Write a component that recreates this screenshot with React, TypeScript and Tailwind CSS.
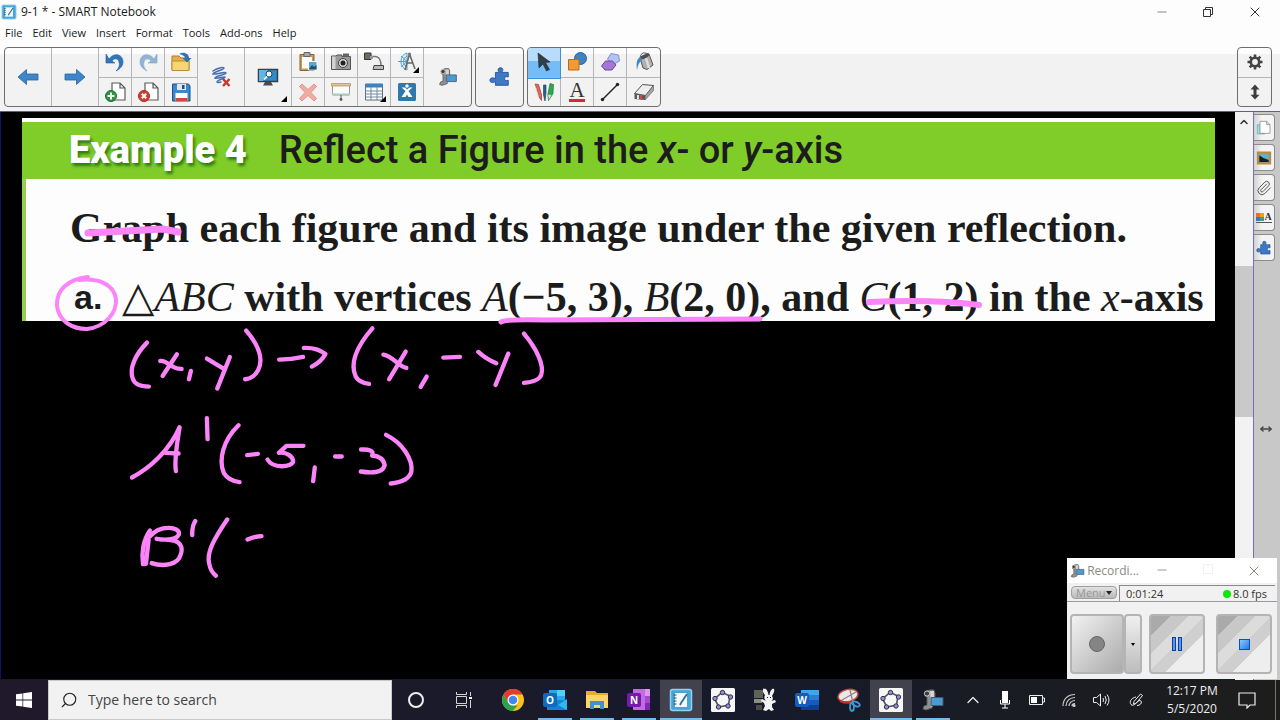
import React from 'react';
import { Search, X, Minus, ChevronUp, Paperclip, MoveHorizontal } from 'lucide-react';

interface IconProps {
  className?: string;
}

const box = '0 0 24 24';

const Arrow = ({ className = '' }: IconProps) => (
  <svg viewBox="0 0 24 24" className={`h-6 w-6 ${className}`}>
    <path d="M2 12 10.500 4.500V9H22v6H10.500v4.500Z" fill="#3d86c9" stroke="#27659f" strokeWidth=".8" />
  </svg>
);

const Undo = ({ className = '' }: IconProps) => (
  <svg viewBox="0 0 24 24" className={`h-6 w-6 ${className}`}>
    <path d="M6 9C11 2 20 4 20 12c0 4-3 7-7 9 3-3 4-6 3-9-1-4-5-4-7-1l3 2H3V4Z" fill="#2f77ba" stroke="#225f9b" strokeWidth=".6" />
  </svg>
);

const PageSheet = () => (
  <path d="M9 3h8l5 5v12H9Z M17 3v5h5" fill="#fff" stroke="#5b5b5b" strokeWidth="1.200" />
);

const AddPage = () => (
  <svg viewBox={box} className="h-6 w-6">
    <PageSheet />
    <circle cx="8" cy="16" r="5.500" fill="#2f9440" stroke="#1d6f2b" />
    <path d="M8 12.500v7M4.500 16h7" stroke="#fff" strokeWidth="2" />
  </svg>
);

const DeletePage = () => (
  <svg viewBox={box} className="h-6 w-6">
    <PageSheet />
    <circle cx="8" cy="16" r="5.500" fill="#d2412f" stroke="#a52c1e" />
    <path d="m5.800 13.800 4.400 4.400m0-4.400-4.400 4.400" stroke="#fff" strokeWidth="2" />
  </svg>
);

const OpenFolder = () => (
  <svg viewBox={box} className="h-6 w-6">
    <path d="M3 6h7l2 2h8v12H3Z" fill="#e2b04a" stroke="#a97f2c" />
    <path d="M3 11h17v9.500H3Z" fill="#f6d577" stroke="#b98d38" />
    <path d="M10 4c5-3 10 0 10 4h2.500l-4.500 4.500L13.500 8H16c0-2-3-3.500-6-4Z" fill="#2e72b4" />
  </svg>
);

const Save = () => (
  <svg viewBox={box} className="h-6 w-6">
    <path d="M3.500 4h16l1.500 2v15H3.500Z" fill="#3f87cc" stroke="#1f4f86" />
    <path d="M8 4h9v6H8Z" fill="#dfe7ee" />
    <path d="M13 5h2.500v4H13Z" fill="#2b4a70" />
    <path d="M6.500 13h12v8h-12Z" fill="#fff" />
    <path d="M6.500 18h12v3h-12Z" fill="#c94a3e" />
  </svg>
);

const ClearInk = () => (
  <svg viewBox={box} className="h-6 w-6">
    <path
      d="M4 6c4-3 10-4 11-3 0 2-9 3-11 6 3 1 12-3 13-1 0 2-9 2-11 5 2 1 9-2 10-1 0 2-7 2-8 5 1 1 3 0 4 0"
      fill="none"
      stroke="#4871b0"
      strokeWidth="1.500"
      strokeLinecap="round"
    />
    <path d="m14 14 6.500 7m0-7L14 21" stroke="#c0392b" strokeWidth="2.400" />
  </svg>
);

const ScreenView = () => (
  <svg viewBox={box} className="h-6 w-6">
    <path d="M2.500 4.500h19v12h-19Z" fill="#2f8ccb" stroke="#3b3f45" strokeWidth="1.500" />
    <path d="M3 5h9l-5 11H3Z" fill="#64b4e4" />
    <path d="M9 17h6l2 3.500H7Z" fill="#4b4b4b" />
    <circle cx="13" cy="9" r="3" fill="#e9f6fc" stroke="#23455f" />
    <path d="m11 11.500-3 3" stroke="#eee" strokeWidth="1.800" />
  </svg>
);

const Paste = () => (
  <svg viewBox={box} className="h-6 w-6">
    <path d="M4 4.500h14v16H4Z" fill="#c99a57" stroke="#8a6330" />
    <path d="M6 7h10v11.500H6Z" fill="#fff" />
    <path d="M8 2.500h6v4H8Z" fill="#aaa" stroke="#666" />
    <path d="M12.500 11.500H21V20h-8.500Z" fill="#5aa7d6" stroke="#fff" />
    <path d="m13 19 3-4 2 2 2.500-2v4.500H13Z" fill="#22506e" />
  </svg>
);

const Camera = () => (
  <svg viewBox={box} className="h-6 w-6">
    <path d="M2.500 6H7l1-1h5v1.500h8.500v13h-19Z" fill="#9a9a9a" stroke="#555" />
    <path d="M3 6.500h3.500V19H3Z" fill="#d2d2d2" />
    <path d="M14 3.500h6v3h-6Z" fill="#666" />
    <circle cx="14" cy="13" r="4.500" fill="#d9d9d9" stroke="#444" />
    <circle cx="14" cy="13" r="2.500" fill="#222" />
  </svg>
);

const DocCamera = () => (
  <svg viewBox={box} className="h-6 w-6">
    <path d="M8 6.500h5c4 0 6 4 6 9" fill="none" stroke="#777" strokeWidth="1.600" />
    <path d="M2.500 3H9v6.500H2.500Z" fill="#6b6b60" stroke="#333" />
    <path d="M8 6h3v3H8Z" fill="#999" />
    <path d="M12 15.500h9.500v4H11Z" fill="#b9b9b9" stroke="#444" />
  </svg>
);

const Compass = () => (
  <svg viewBox={box} className="h-6 w-6">
    <path d="M12 3A9 9 0 0 0 12 20Z" fill="#d9effa" stroke="#5b9dc7" />
    <path d="M12 6A6 6 0 0 0 12 17M3 11.500h9M6 6l6 5.500M6 17l6-5.500" fill="none" stroke="#5b9dc7" />
    <path d="m14.500 4-4.500 16M14.500 4 20 19M12 13h5.500" fill="none" stroke="#6a6a6a" strokeWidth="1.600" />
    <circle cx="14.500" cy="4" r="1.600" fill="#777" />
  </svg>
);

const Delete = () => (
  <svg viewBox={box} className="h-6 w-6">
    <path d="m6 4 6 5.500L18 4l2.500 2.500-5.500 6 5.500 6L18 21l-6-5.500L6 21l-2.500-2.500 5.500-6-5.500-6Z" fill="#f0aca3" stroke="#e2968c" />
  </svg>
);

const ScreenShade = () => (
  <svg viewBox={box} className="h-6 w-6">
    <path d="M3.500 5h17v10h-17Z" fill="#fbfbfb" stroke="#999" />
    <path d="M2.500 3.500h19v2.500h-19Z" fill="#dcc78c" stroke="#a89152" strokeWidth=".7" />
    <path d="M3 13.500h18v1.500H3Z" fill="#a9c9c2" />
    <path d="M12 15v4" stroke="#555" />
    <circle cx="12" cy="19.500" r="1.400" fill="#555" />
  </svg>
);

const TableIcon = () => (
  <svg viewBox={box} className="h-6 w-6">
    <path d="M3.500 4h17v16h-17Z" fill="#fff" stroke="#5d6b78" />
    <path d="M3.500 4h17v3.500h-17Z" fill="#3f82bd" />
    <path d="M3.500 11h17M3.500 14h17M3.500 17h17M9 7v13M15 7v13" stroke="#6d8aa4" />
  </svg>
);

const Exchange = () => (
  <svg viewBox={box} className="h-6 w-6">
    <rect x="3" y="3" width="18" height="18" rx="1.500" fill="#2f78ae" />
    <path d="m6.500 7.500 4 3.500L6.500 17h4l1.500-2.500 1.500 2.500h4l-4-6 4-3.500h-3L12 9.500l-2-2Z" fill="#fff" />
    <circle cx="12" cy="6" r="1.700" fill="#fff" />
  </svg>
);

const Camcorder = ({ className = 'h-6 w-6' }: IconProps) => (
  <svg viewBox={box} className={className}>
    <path d="M4 4q4-3 9-2l1 3v5l-2 7-1 3-6 2-3-1 1-3 3-1V9L4 8Z" fill="#8f8f8f" stroke="#5a5a5a" />
    <path d="M9 3h4v14l-3 2Z" fill="#d4d4d4" />
    <circle cx="6" cy="5.500" r="2.600" fill="#3c3c3c" stroke="#ccc" />
    <path d="M10 9.500h12v8H10Z" fill="#4c9ad0" stroke="#3b5a78" />
  </svg>
);

const Puzzle = ({ className = 'h-6 w-6' }: IconProps) => (
  <svg viewBox={box} className={className}>
    <path d="M7 7h4c-2-3-1-5 1.500-5S16 4 14 7h7v5c-3-1-4 0-4 2s2 2.500 4 1.500V21H7v-4c-3 2-6 1-6-1.500S4 12 7 14Z" fill="#3f79c6" stroke="#245293" />
  </svg>
);

const Pointer = () => (
  <svg viewBox={box} className="h-6 w-6">
    <path d="m6 3 12 9-4.500.500 4 7-3 1.500-3.500-7-4 4Z" fill="#333d47" stroke="#20272e" strokeWidth=".6" />
  </svg>
);

const Shapes = () => (
  <svg viewBox={box} className="h-6 w-6">
    <circle cx="15.500" cy="8.500" r="6" fill="#3f82c4" stroke="#2a5f98" />
    <path d="M3.500 9.500h10.500v10.500H3.500Z" fill="#f39a32" stroke="#b86a16" />
  </svg>
);

const Polygons = () => (
  <svg viewBox={box} className="h-6 w-6">
    <path d="m13 3.500 7.500 1.500 1 6-7 4-5-6Z" fill="#b6c2f3" stroke="#7f8ecb" />
    <path d="M7.500 11h7l3.500 4-4 5H7l-3.500-4Z" fill="#a377d3" stroke="#6f49a4" />
  </svg>
);

const Bucket = () => (
  <svg viewBox={box} className="h-6 w-6">
    <path d="m8 8 9-4 4 11-6 4.500L11 18Z" fill="#b0b0b0" stroke="#555" />
    <path d="m14 8 3 10" stroke="#dedede" strokeWidth="2.500" />
    <path d="M8 8q1-6 5-5t4 1Z" fill="#f4f4f4" stroke="#555" />
    <ellipse cx="12.500" cy="6.500" rx="4.800" ry="2" fill="#4d4d4d" transform="rotate(-24 12.500 6.500)" />
    <path d="M9 7c-4 1-5 5-4 13 1-5 2-8 5-10Z" fill="#3b89c6" />
  </svg>
);

const Pens = () => (
  <svg viewBox={box} className="h-6 w-6">
    <path d="m3 4 3.500.500 3 10v6L7 17Z" fill="#e2645e" stroke="#8b2a25" strokeWidth=".6" />
    <path d="m3 4 4 13-1.500-.5Z" fill="#f5d9d7" />
    <path d="M11.500 5h2.500v8l-1 8-1.500-6Z" fill="#2c5f92" stroke="#18395c" strokeWidth=".6" />
    <path d="m18 3.500 3.500 1-.5 9-4.500 7-.5-7Z" fill="#2eaa4c" stroke="#17642b" strokeWidth=".6" />
    <path d="m16 14 4 1-3.500 5.500Z" fill="#d7ecd9" stroke="#17642b" strokeWidth=".4" />
  </svg>
);

const TextTool = () => (
  <span className="flex w-5 flex-col items-center">
    <span className="font-['Liberation_Serif',serif] text-[21px] leading-[17px] text-[#333]">A</span>
    <span className="h-[3px] w-4 bg-[#d02a3c]" />
  </span>
);

const LineTool = () => (
  <svg viewBox={box} className="h-6 w-6">
    <path d="M4.500 19.500 19.500 4.500" stroke="#222" strokeWidth="1.400" />
    <circle cx="4.500" cy="19.500" r="1.700" fill="#222" />
    <circle cx="19.500" cy="4.500" r="1.700" fill="#222" />
  </svg>
);

const Eraser = () => (
  <svg viewBox={box} className="h-6 w-6">
    <path d="m2.500 13.500 8-9 11 1-8 10Z" fill="#ededed" stroke="#555" />
    <path d="M2.500 13.500v5.500l10.500 1 .5-4.500Z" fill="#5a5a5a" />
    <path d="m13.500 15.500 8-10v5l-8.500 9.500Z" fill="#a5a5a5" stroke="#555" strokeWidth=".6" />
    <path d="M5 15h2v4H5Z" fill="#e9e2d6" />
    <path d="M8 15h2v4.500H8Z" fill="#d44" />
  </svg>
);

const Gear = () => (
  <svg viewBox="0 0 16 16" className="h-4 w-4" fill="none" stroke="#444">
    <circle cx="8" cy="8" r="4.200" strokeWidth="2.600" />
    <path d="M8 .5v3M8 12.500v3M.5 8h3M12.500 8h3M2.700 2.700l2.100 2.100M11.200 11.200l2.100 2.100M2.700 13.300l2.100-2.100M11.200 4.800l2.100-2.100" strokeWidth="2.600" />
  </svg>
);

const Resize = () => (
  <svg viewBox={box} className="h-[18px] w-[18px]">
    <path d="m12 2 6 6.500h-4v7h4L12 22l-6-6.500h4v-7H6Z" fill="#3d3d3d" />
  </svg>
);

const NotebookLogo = ({ className = 'h-5 w-5' }: IconProps) => (
  <svg viewBox={box} className={className}>
    <rect x="1.500" y="1.500" width="21" height="21" rx="2" fill="#45a5d6" stroke="#8dd2ee" strokeWidth="1.500" />
    <path d="M6 5h12v14H6Z" fill="#f2fafe" />
    <path d="M4.500 7h3M4.500 10h3M4.500 13h3M4.500 16h3" stroke="#3b4b58" />
    <path d="m18 6-6 9-1 2" stroke="#3a6e8e" strokeWidth="1.800" />
  </svg>
);

interface Tool {
  label: string;
  icon: React.ReactNode;
  more?: boolean;
  active?: boolean;
}

const mainTools: Tool[][] = [
  [{ label: 'Previous Page', icon: <Arrow /> }],
  [{ label: 'Next Page', icon: <Arrow className="-scale-x-100" /> }],
  [{ label: 'Undo', icon: <Undo /> }, { label: 'Add Page', icon: <AddPage /> }],
  [{ label: 'Redo', icon: <Undo className="-scale-x-100 opacity-50" /> }, { label: 'Delete Page', icon: <DeletePage /> }],
  [{ label: 'Open File', icon: <OpenFolder /> }, { label: 'Save', icon: <Save /> }],
  [{ label: 'Clear Ink', icon: <ClearInk /> }],
  [{ label: 'View Screens', icon: <ScreenView />, more: true }],
  [{ label: 'Paste', icon: <Paste /> }, { label: 'Delete', icon: <Delete /> }],
  [{ label: 'Screen Capture', icon: <Camera /> }, { label: 'Screen Shade', icon: <ScreenShade /> }],
  [{ label: 'Document Camera', icon: <DocCamera /> }, { label: 'Table', icon: <TableIcon />, more: true }],
  [{ label: 'Measurement Tools', icon: <Compass />, more: true }, { label: 'SMART Exchange', icon: <Exchange /> }],
  [{ label: 'Recorder', icon: <Camcorder className="h-5 w-5" /> }],
];

const addonTools: Tool[][] = [[{ label: 'Add-ons', icon: <Puzzle className="h-[22px] w-[22px]" /> }]];

const drawTools: Tool[][] = [
  [{ label: 'Select', icon: <Pointer />, active: true }, { label: 'Pens', icon: <Pens /> }],
  [{ label: 'Shapes', icon: <Shapes /> }, { label: 'Text', icon: <TextTool /> }],
  [{ label: 'Regular Polygons', icon: <Polygons /> }, { label: 'Lines', icon: <LineTool /> }],
  [{ label: 'Fill', icon: <Bucket /> }, { label: 'Eraser', icon: <Eraser /> }],
];

const windowTools: Tool[][] = [
  [
    { label: 'Settings', icon: <Gear /> },
    { label: 'Move Toolbar', icon: <Resize /> },
  ],
];

const ToolGroup: React.FC<{ columns: Tool[][] }> = ({ columns }) => (
  <div className="flex h-[60px] divide-x divide-[#b5b5b5] overflow-hidden rounded border border-[#6e6e6e]">
    {columns.map((column) => (
      <div
        key={column[0].label}
        className={`flex flex-col divide-y divide-[#b5b5b5] ${column.length === 1 ? 'w-[47px]' : 'w-[33px]'}`}
      >
        {column.map((tool) => (
          <button
            key={tool.label}
            aria-label={tool.label}
            className={`relative flex flex-1 items-center justify-center ${
              tool.active ? 'bg-[linear-gradient(#b9dcfa_45%,#76bdf8_45%)] outline outline-[#3b8edb]' : ''
            }`}
          >
            {tool.icon}
            {tool.more && (
              <svg viewBox="0 0 6 6" className="absolute right-1 bottom-1 h-1.5 w-1.5">
                <path d="M6 0v6H0Z" />
              </svg>
            )}
          </button>
        ))}
      </div>
    ))}
  </div>
);

const menus = ['File', 'Edit', 'View', 'Insert', 'Format', 'Tools', 'Add-ons', 'Help'];

const Header = () => (
  <header className="bg-[#fdfdfd] text-[#1a1a1a]">
    <div className="flex h-6 items-center">
      <NotebookLogo className="ml-px h-4 w-4" />
      <h1 className="ml-1 text-xs">9-1 * - SMART Notebook</h1>
      <div className="ml-auto flex text-[#333]">
        <button aria-label="Minimize" className="flex w-[46px] items-center justify-center">
          <Minus className="h-3.5 w-3.5" strokeWidth={1} />
        </button>
        <button aria-label="Restore" className="flex w-[46px] items-center justify-center">
          <svg viewBox="0 0 12 12" className="h-3 w-3" fill="none" stroke="currentColor">
            <path d="M1.500 3.500h7v7h-7ZM3.500 3.500v-2h7v7h-2" />
          </svg>
        </button>
        <button aria-label="Close" className="mr-px flex w-[48px] items-center justify-center">
          <X className="h-4 w-4" strokeWidth={1.500} />
        </button>
      </div>
    </div>
    <nav className="flex h-[18px] items-center gap-2.5 px-[5px]">
      {menus.map((menu) => (
        <button key={menu} className="text-[11px]">
          {menu}
        </button>
      ))}
    </nav>
    <div className="flex gap-[3px] border-b border-[#5d6187] bg-[linear-gradient(#fdfdfd_12px,#f2f2f2_12px)] px-1 pt-[5px] pb-1">
      <ToolGroup columns={mainTools} />
      <ToolGroup columns={addonTools} />
      <ToolGroup columns={drawTools} />
      <div className="mr-1 ml-auto">
        <ToolGroup columns={windowTools} />
      </div>
    </div>
  </header>
);

const Problem = () => (
  <section className="ml-[21px] w-[1193px] bg-[#fdfdfd] pt-1 whitespace-nowrap text-[#1c1c1c]">
    <h2 className="flex h-[57px] items-center gap-8 bg-[#80cc28] pl-[47px] font-[Roboto,'Liberation_Sans',sans-serif] text-[38px]">
      <strong className="font-black text-white [text-shadow:2px_3px_3px_#2f7d12]">Example 4</strong>
      <span className="font-medium">
        Reflect a Figure in the <i>x</i>- or <i>y</i>-axis
      </span>
    </h2>
    <div className="border-l-4 border-[#92d050] font-['Liberation_Serif',serif] text-[42px] font-bold">
      <p className="pt-6 pl-[44px] leading-[50px]">Graph each figure and its image under the given reflection.</p>
      <p className="flex gap-5 pt-5 pl-[48px] leading-[48px]">
        <span className="font-['Liberation_Sans',sans-serif] text-[34px]">a.</span>
        <span>
          <span className="font-normal">△</span>
          <i className="font-normal">ABC</i> with vertices <i className="font-normal">A</i>(−5, 3),{' '}
          <i className="font-normal">B</i>(2, 0), and <i className="font-normal">C</i>(1, 2) in the{' '}
          <i className="font-normal">x</i>-axis
        </span>
      </p>
    </div>
  </section>
);

const handwriting = [
  // (x, y) -> (x, -y)
  'M141 98C105 135 88 175 98 205Q105 230 147 230',
  'M181 153C205 150 210 178 245 177M231 133 188 198M273 183 267 208',
  'M321 146 372 177M390 141 352 236',
  'M439 62C480 110 490 150 475 180Q462 205 436 208',
  'M538 149Q575 149 610 141M612 114Q650 112 677 132Q665 155 636 170',
  'M818 55C770 110 750 160 768 200Q778 218 808 222',
  'M851 134C880 138 895 170 920 174M918 125 868 208M981 200 963 231',
  'M1031 143 1081 141M1136 126Q1160 148 1190 160M1226 131 1188 225',
  'M1273 71C1310 115 1335 165 1325 195Q1318 215 1273 219',
  // A'(-5, -3)
  'M96 503C150 475 210 420 239 352C232 400 222 450 228 484M197 429 236 431M321 325 323 388',
  'M416 346C370 390 355 450 372 490Q385 512 419 517M442 436 474 432',
  'M611 408 560 408 537 429C560 425 580 440 580 455C575 472 520 478 503 449M645 473 640 514',
  'M706 440 726 440M784 419C805 418 825 422 817 437Q850 440 855 465Q850 495 783 485',
  'M859 375C910 400 940 450 935 485Q928 515 873 521',
  // B'(-
  'M150 662C130 690 124 730 129 763L138 762 146 690',
  'M150 680C180 643 242 650 237 674C230 690 200 692 170 687M200 690C245 690 250 715 242 735C235 765 190 772 155 760',
  'M286 634Q276 650 277 676M382 629C340 690 320 730 328 762Q332 785 348 798M443 689Q465 680 485 679',
];

const Ink = () => (
  <svg
    viewBox="1 112 1234 567"
    className="pointer-events-none absolute top-0 left-0 h-[567px] w-[1234px]"
    fill="none"
    stroke="#fb84f8"
    strokeLinecap="round"
    strokeLinejoin="round"
  >
    <path d="M88 233 163 229 178 232" strokeWidth="7" />
    <path d="M88 277C68 279 56 290 57 306C59 322 73 329 87 329C105 327 117 313 116 299C114 284 98 278 79 280" strokeWidth="4" />
    <path d="M501 322Q505 319 545 320L760 319" strokeWidth="5" />
    <path d="M869 302Q935 299 979 305" strokeWidth="6" />
    <g transform="translate(100 310) scale(.333)" strokeWidth="13">
      {handwriting.map((d) => (
        <path key={d} d={d} />
      ))}
    </g>
  </svg>
);

const sideTabs: Tool[] = [
  {
    label: 'Page Sorter',
    icon: (
      <svg viewBox={box} className="h-4 w-4">
        <path d="M2 7h11v14H2Z" fill="#9fd9e2" stroke="#5ba9b5" />
        <path d="M6 2h10l5 5v13H6ZM16 2v5h5" fill="#fff" stroke="#777" />
      </svg>
    ),
  },
  {
    label: 'Gallery',
    icon: (
      <svg viewBox={box} className="h-4 w-4">
        <path d="M3 4h18v16H3Z" fill="#62b4c4" stroke="#b98a45" strokeWidth="3.500" />
        <path d="m5 8 6 4 8 3v3H5Z" fill="#152026" />
      </svg>
    ),
  },
  { label: 'Attachments', icon: <Paperclip className="h-4 w-4 text-[#555]" strokeWidth={1.500} /> },
  {
    label: 'Properties',
    icon: (
      <span className="flex items-end border-b border-[#555] font-['Liberation_Serif',serif] text-[10px] leading-[10px] font-bold text-[#333]">
        <span className="mb-px grid grid-cols-2">
          <span className="h-1 w-1 bg-[#e2732c]" />
          <span className="h-1 w-1 bg-[#d9a53a]" />
          <span className="h-1 w-1 bg-[#3c78b8]" />
          <span className="h-1 w-1 bg-[#4d9b74]" />
        </span>
        A
      </span>
    ),
  },
  { label: 'Add-ons tab', icon: <Puzzle className="h-4 w-4" /> },
];

const Sidebar = () => (
  <aside className="relative flex w-[27px] flex-col gap-[3px] border-l border-[#7470b8] bg-[#c8c8c8] pt-0.5">
    {sideTabs.map((tab) => (
      <button
        key={tab.label}
        aria-label={tab.label}
        className="flex h-[27px] w-[21px] items-center justify-center rounded-r border border-l-0 border-[#8c8c8c] bg-linear-to-r from-[#d2d2d2] to-[#f4f4f4] to-40%"
      >
        {tab.icon}
      </button>
    ))}
    <MoveHorizontal className="absolute top-[311px] left-[6px] h-3 w-3 text-[#444]" strokeWidth={3} />
  </aside>
);

const recorderKey = 'flex h-[60px] items-center justify-center rounded border-2 border-[#b4b4b4]';

const Recorder = () => (
  <section className="absolute right-[3px] bottom-px w-[210px] bg-[#f1f1f1] text-[#333]">
    <div className="flex h-[25px] items-center bg-white pl-[3px] text-xs text-[#8a8a80]">
      <Camcorder className="h-4 w-4" />
      <h2 className="ml-0.5">Recordi...</h2>
      <div className="ml-auto flex">
        <button aria-label="Minimize recorder" className="flex w-[46px] justify-center">
          <Minus className="h-3.5 w-3.5" strokeWidth={1.500} />
        </button>
        <button aria-label="Maximize recorder" className="flex w-[46px] justify-center text-[#f1f1f1]">
          <svg viewBox="0 0 12 12" className="h-3 w-3" fill="none" stroke="currentColor">
            <path d="M1.500 1.500h9v9h-9Z" />
          </svg>
        </button>
        <button aria-label="Close recorder" className="flex w-[46px] justify-center">
          <X className="h-4 w-4" strokeWidth={1.500} />
        </button>
      </div>
    </div>
    <div className="flex h-[19px] items-end gap-0.5 border-b border-[#9a9a9a] pr-0.5 pl-1 text-[11px] whitespace-nowrap">
      <button className="mb-0.5 flex h-[13px] w-[46px] items-center justify-between rounded border border-[#a0a0a0] bg-linear-to-b from-[#e2e2e2] to-[#b9b9b9] px-1 leading-[13px] text-[#999]">
        Menu
        <svg viewBox="0 0 6 4" className="h-1 w-1.5">
          <path d="M0 0h6L3 4Z" fill="#222" />
        </svg>
      </button>
      <div className="flex h-4 flex-1 items-center border-t border-l border-[#8a8a8a] pr-2 pl-1.5 leading-4">
        <span>0:01:24</span>
        <span className="ml-auto h-2 w-2 rounded-full bg-[#0be80b]" />
        <span className="ml-0.5">8.0 fps</span>
      </div>
    </div>
    <div className="flex px-[3px] pt-3 pb-[5px]">
      <button aria-label="Record" className={`${recorderKey} w-[54px] bg-linear-to-br from-[#f2f2f2] to-[#ababab]`}>
        <span className="h-4 w-4 rounded-full border border-[#666] bg-[#858585]" />
      </button>
      <button aria-label="Record options" className={`${recorderKey} w-[18px] bg-linear-to-b from-[#f0f0f0] to-[#bdbdbd]`}>
        <svg viewBox="0 0 4 3" className="h-[3px] w-1">
          <path d="M0 0h4L2 3Z" />
        </svg>
      </button>
      <button
        aria-label="Pause"
        className={`${recorderKey} ml-[7px] w-14 gap-0.5 bg-[linear-gradient(135deg,#aaa_18%,#c8c8c8_18%_35%,#dcdcdc_35%_50%,#cfcfcf_50%_65%,#eee_65%)]`}
      >
        <span className="h-3.5 w-1 border border-[#123f9c] bg-[#4f9bf0]" />
        <span className="h-3.5 w-1 border border-[#123f9c] bg-[#4f9bf0]" />
      </button>
      <button
        aria-label="Stop"
        className={`${recorderKey} mr-0.5 ml-auto w-14 bg-[linear-gradient(135deg,#aaa_18%,#c8c8c8_18%_35%,#dcdcdc_35%_50%,#cfcfcf_50%_65%,#eee_65%)]`}
      >
        <span className="h-[11px] w-[11px] border border-[#0b50b8] bg-linear-to-br from-[#8cc8ff] to-[#1d78e6]" />
      </button>
    </div>
  </section>
);

const Chrome = () => (
  <svg viewBox={box} className="h-6 w-6">
    <circle cx="12" cy="12" r="11" fill="#fbc116" />
    <path d="M12 1a11 11 0 0 1 9.500 5.500H12L7.200 14.800 2.500 6.500A11 11 0 0 1 12 1Z" fill="#e33b2e" />
    <path d="M2.500 6.500 7.200 14.700 12 17.500h4.800L11.500 23A11 11 0 0 1 2.500 6.500Z" fill="#2ba24c" />
    <circle cx="12" cy="12" r="5.500" fill="#fff" />
    <circle cx="12" cy="12" r="4.300" fill="#4387ee" />
  </svg>
);

const OfficeTile: React.FC<{ letter: string; badge: string; children: React.ReactNode }> = ({ letter, badge, children }) => (
  <span className="relative flex h-6 w-6 items-center">
    <svg viewBox={box} className="absolute h-6 w-6">
      {children}
    </svg>
    <span className={`relative flex h-3.5 w-3.5 items-center justify-center rounded-xs text-[10px] font-bold text-white ${badge}`}>
      {letter}
    </span>
  </span>
);

const Explorer = () => (
  <svg viewBox={box} className="h-6 w-6">
    <path d="M1 3h9l2 2h11v15H1Z" fill="#e7ac2e" />
    <path d="M1 7h22v13H1Z" fill="#fbd667" />
    <path d="M5 21v-8h14v8h-4v-4H9v4Z" fill="#3c93cf" />
  </svg>
);

const GeoGebra = () => (
  <svg viewBox={box} className="h-6 w-6">
    <rect width="24" height="24" rx="1.500" fill="#f7f7f7" />
    <path d="M11 4.500 19 8 17.500 17 8 19 3.500 11Z" fill="none" stroke="#555" strokeWidth="1.600" />
    <g fill="#8c8cf0" stroke="#333">
      <circle cx="11.500" cy="4.500" r="2.200" />
      <circle cx="19.500" cy="9" r="2.200" />
      <circle cx="17" cy="18" r="2.200" />
      <circle cx="7.500" cy="19" r="2.200" />
      <circle cx="4" cy="10.500" r="2.200" />
    </g>
  </svg>
);

const Rabbit = () => (
  <svg viewBox={box} className="h-6 w-6">
    <path d="M1 2h9v8H1Z" fill="#5d6356" />
    <path d="M1 11h8v4H1Z" fill="#8b8f84" />
    <path d="M3 17h6v5H3Z" fill="#4c4f49" />
    <path d="M11 1c2-1 4 2 4.500 6h1C17 3 19 0 21 1c1 2-1 5-2 7 2 3 0 5-1 5l4-1 1 2-4 2v3l2 3-3 1-2-2-3 2-3-1 2-4-1-3-3-2 1-2 4 2c-2-2-2-4-1-6-2-2-3-5-1-7Z" fill="#f3f3f3" />
    <path d="M14 9.500h1M17 9.500h1" stroke="#222" />
  </svg>
);

const Snip = () => (
  <svg viewBox={box} className="h-6 w-6">
    <ellipse cx="11" cy="7.500" rx="10" ry="6" fill="#e9e9ea" stroke="#d14a43" strokeWidth="1.500" transform="rotate(-12 11 7.500)" />
    <path d="M5 12 19 4M13 2l3 13" stroke="#888" strokeWidth="1.300" />
    <path d="M3 13q6 3 12 1" stroke="#b9322c" strokeWidth="2" fill="none" />
    <ellipse cx="15" cy="19" rx="2" ry="4" fill="none" stroke="#3c9ad1" strokeWidth="1.800" />
    <ellipse cx="19" cy="16" rx="4" ry="2" fill="none" stroke="#3c9ad1" strokeWidth="1.800" transform="rotate(25 19 16)" />
  </svg>
);

interface TaskApp {
  name: string;
  icon: React.ReactNode;
  state?: 'running' | 'active';
}

const apps: TaskApp[] = [
  { name: 'Google Chrome', icon: <Chrome /> },
  {
    name: 'Outlook',
    state: 'running',
    icon: (
      <OfficeTile letter="O" badge="bg-[#0f6cbd]">
        <path d="M6 2h16v11H6Z" fill="#28a8ea" />
        <path d="M14 2h8v6h-8Z" fill="#50d0fb" />
        <path d="M4 12h20v10H4Z" fill="#1584d0" />
        <path d="m24 11-9 6 9 5Z" fill="#35b5ef" />
      </OfficeTile>
    ),
  },
  { name: 'File Explorer', icon: <Explorer />, state: 'running' },
  {
    name: 'OneNote',
    state: 'running',
    icon: (
      <OfficeTile letter="N" badge="bg-[#7719aa]">
        <path d="M6 1h17v21H6Z" fill="#c26ce0" />
        <path d="M18 1h5v7h-5Z" fill="#d998ee" />
        <path d="M18 8h5v7h-5Z" fill="#a34ad0" />
        <path d="M18 15h5v7h-5Z" fill="#8528b5" />
      </OfficeTile>
    ),
  },
  { name: 'SMART Notebook', icon: <NotebookLogo className="h-6 w-6" />, state: 'active' },
  { name: 'GeoGebra', icon: <GeoGebra /> },
  { name: 'Rabbit', icon: <Rabbit /> },
  {
    name: 'Word',
    icon: (
      <OfficeTile letter="W" badge="bg-[#185abd]">
        <path d="M6 2h18v6H6Z" fill="#41a5ee" />
        <path d="M6 7h18v5H6Z" fill="#2b7cd3" />
        <path d="M6 12h18v5H6Z" fill="#185abd" />
        <path d="M6 17h18v5H6Z" fill="#103f91" />
      </OfficeTile>
    ),
  },
  { name: 'Snipping Tool', icon: <Snip /> },
  { name: 'GeoGebra Classic', icon: <GeoGebra />, state: 'active' },
  { name: 'SMART Recorder', icon: <Camcorder />, state: 'running' },
];

const Tray = () => (
  <div className="ml-auto flex items-center text-[#eee]">
    <button aria-label="Show hidden icons" className="flex w-8 justify-center">
      <ChevronUp className="h-5 w-5" strokeWidth={1.500} />
    </button>
    <button aria-label="Microphone" className="flex w-8 justify-center">
      <svg viewBox="0 0 12 18" className="h-[18px] w-3">
        <rect x="3" width="6" height="12" fill="#fff" />
        <path d="M1.500 9v4h9V9M6 13v4M3 17h6" fill="none" stroke="#fff" />
      </svg>
    </button>
    <button aria-label="Battery" className="flex w-8 justify-center">
      <svg viewBox="0 0 16 10" className="h-2.5 w-4">
        <path d="M.5.500h13v9H.5ZM14 3h1.500v4H14" fill="none" stroke="#eee" />
        <path d="M2 2h6v6H2Z" fill="#fff" />
      </svg>
    </button>
    <button aria-label="Network" className="flex w-8 justify-center">
      <svg viewBox="0 0 16 16" className="h-4 w-4" fill="none" stroke="#ccc" strokeWidth="1.200">
        <path d="M2 14C2 7 7 2.500 14 2.500M5 14c0-5 4-8.500 9-8.500M8 14c0-3 3-5.500 6-5.500M11 14c0-1.500 1.500-2.500 3-2.500" />
        <circle cx="13" cy="13.500" r="1" fill="#fff" />
      </svg>
    </button>
    <button aria-label="Volume" className="flex w-8 justify-center">
      <svg viewBox="0 0 18 16" className="h-4 w-[18px]" fill="none" stroke="currentColor">
        <path d="M1.500 5.500h3l4-3.500v12l-4-3.500h-3ZM11 6q1 2 0 4M13 4q2.500 4 0 8M15 2.500q4 5.500 0 11" />
      </svg>
    </button>
    <button aria-label="Windows Ink Workspace" className="flex w-10 justify-center">
      <svg viewBox="0 0 16 16" className="h-4 w-4" fill="none" stroke="currentColor">
        <path d="m5 9.500 6.500-7.500 2 1.500L7 11.500l-2.500.5ZM7 5C2 6 0 10 2 12.500c3 3 6-4 9-4 3 1 1 5-3 5" />
      </svg>
    </button>
    <time className="w-[70px] text-center text-xs leading-[18px] whitespace-nowrap">
      12:17 PM
      <br />
      5/5/2020
    </time>
    <button aria-label="Notifications" className="flex w-10 justify-center">
      <svg viewBox="0 0 18 18" className="h-[18px] w-[18px]" fill="none" stroke="currentColor" strokeWidth="1.200">
        <path d="M1 2h16v12h-5l-3 3v-3H1Z" />
      </svg>
    </button>
    <span className="mr-1 ml-2 h-10 w-px bg-[#777]" />
  </div>
);

const Taskbar = () => (
  <footer className="flex h-10 bg-linear-to-r from-[#20192b] via-[#161a2a] via-60% to-[#1d1d1c]">
    <button aria-label="Start" className="flex w-12 items-center justify-center">
      <svg viewBox="0 0 16 16" className="h-4 w-4" fill="#fff">
        <path d="M0 2.300 6.500 1.400v6.200H0ZM7.200 1.300 16 0v7.600H7.200ZM0 8.400h6.500v6.200L0 13.700ZM7.200 8.400H16V16l-8.800-1.300Z" />
      </svg>
    </button>
    <label className="flex w-[344px] items-center gap-2.5 border border-[#c9c9c9] bg-[#f2f2f2] pl-[11px]">
      <Search className="h-[18px] w-[18px] -scale-x-100 text-[#222]" strokeWidth={1.500} />
      <input
        aria-label="Search"
        placeholder="Type here to search"
        className="min-w-0 flex-1 bg-transparent text-sm outline-none placeholder:text-[#444]"
      />
    </label>
    <button aria-label="Cortana" className="flex w-12 items-center justify-center">
      <span className="h-4 w-4 rounded-full border-2 border-[#eee]" />
    </button>
    <button aria-label="Task View" className="mr-1 flex w-12 items-center justify-center">
      <svg viewBox="0 0 17 16" className="h-4 w-[17px]" fill="none" stroke="#d5d5d5">
        <path d="M.5 0v2.500h10V0M.5 16v-2.500h10V16M.5 4.500h10v7H.5ZM14.500 0v4M14.500 8v8" />
        <path d="M13 5h3v2h-3Z" fill="#fff" stroke="none" />
      </svg>
    </button>
    {apps.map((app) => (
      <button
        key={app.name}
        aria-label={app.name}
        className={`relative flex w-[42px] items-center justify-center ${app.state === 'active' ? 'bg-[#42424f]' : ''}`}
      >
        {app.icon}
        {app.state && (
          <span className={`absolute bottom-0 h-0.5 bg-[#76b9ed] ${app.state === 'active' ? 'inset-x-0' : 'inset-x-1'}`} />
        )}
      </button>
    ))}
    <Tray />
  </footer>
);

export default function App() {
  return (
    <div className="flex min-h-screen flex-col bg-black font-['Open_Sans','Noto_Sans',sans-serif]">
      <Header />
      <main className="relative flex flex-1">
        <div className="relative min-w-0 flex-1 overflow-hidden border-b border-l border-[#10106a] bg-black pt-[6px]">
          <Problem />
          <Ink />
        </div>
        <div className="flex w-[18px] flex-col items-center bg-[#f2f2f2]">
          <ChevronUp className="mt-1 h-3 w-3 text-[#333]" strokeWidth={3} />
          <div className="mt-[138px] h-[151px] w-full bg-[#c9c9c9]" />
        </div>
        <Sidebar />
        <Recorder />
      </main>
      <Taskbar />
    </div>
  );
}
